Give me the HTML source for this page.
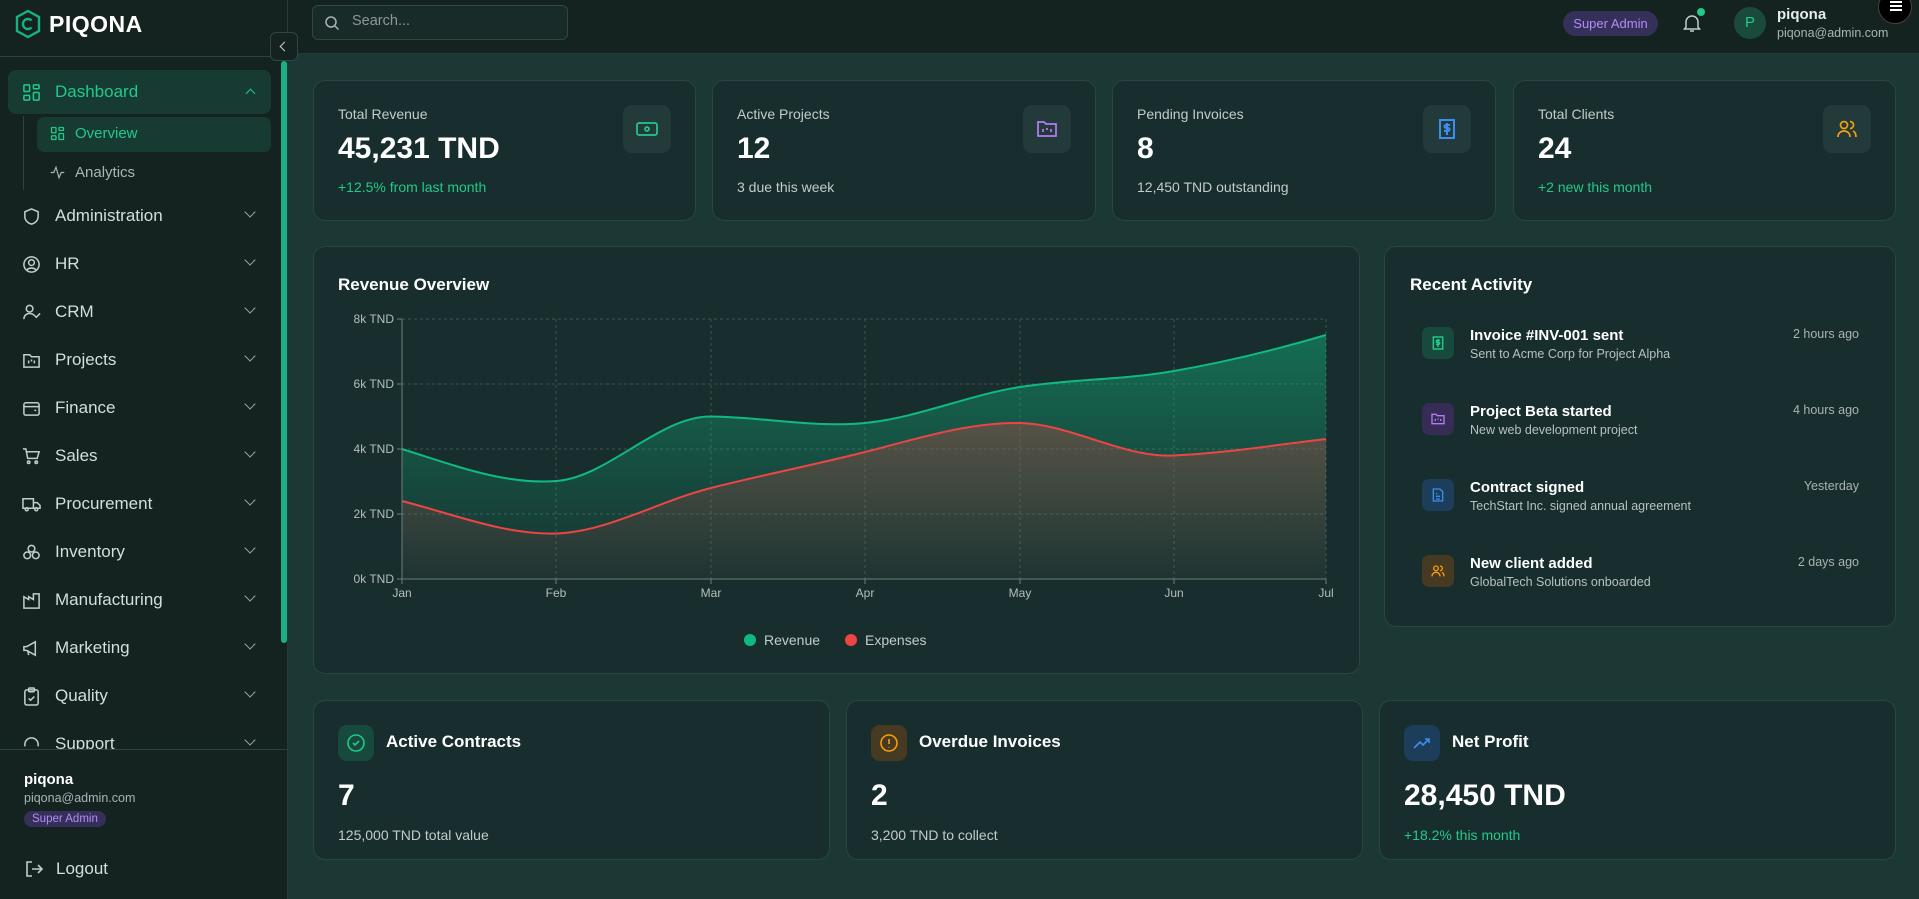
<!DOCTYPE html>
<html><head><meta charset="utf-8"><style>
*{box-sizing:border-box;margin:0;padding:0}
body{width:1919px;height:899px;overflow:hidden;background:#1c3835;font-family:"Liberation Sans",sans-serif;color:#fff;position:relative}
.abs{position:absolute}
.side{left:0;top:0;width:288px;height:899px;background:#14231f;border-right:1px solid #243a36}
.hdr{left:288px;top:0;width:1631px;height:54px;background:#14231f;border-bottom:1px solid #243a36}
.card{position:absolute;background:#182e2e;border:1px solid #2a4441;border-radius:12px}
.nav{position:absolute;left:22px;font-size:17px;color:#d6dedc;display:flex;align-items:center}
.nav svg{margin-right:14px}
.chev{position:absolute;left:246px;width:8px;height:8px;border-right:1.6px solid #9aa7a4;border-bottom:1.6px solid #9aa7a4;transform:rotate(45deg)}
.lbl{font-size:14px;color:#c3ccca}
.big{font-size:30px;font-weight:bold}
.ib{position:absolute;width:48px;height:48px;border-radius:9px;background:#223a39;display:flex;align-items:center;justify-content:center}
.sub{font-size:14px}
.ax{font-size:12px;fill:#b4bfbc;font-family:"Liberation Sans",sans-serif}
.act-t{font-size:15px;font-weight:bold;color:#fff}
.act-s{font-size:12.5px;color:#b7c1bf;margin-top:3px}
.act-tm{position:absolute;right:36px;font-size:12.5px;color:#a9b3b1}
.ai{position:absolute;left:37px;width:32px;height:32px;border-radius:7px;display:flex;align-items:center;justify-content:center}
</style></head><body>
<div class="abs side"></div>
<div class="abs hdr"></div>
<!-- logo -->
<svg class="abs" style="left:13px;top:9px" width="30" height="30" viewBox="0 0 30 30"><path d="M15 2 L26 8 L26 22 L15 28 L4 22 L4 8 Z" fill="none" stroke="#19b184" stroke-width="2.4"/><path d="M18.5 11.5 A5 5 0 1 0 18.5 18.5" fill="none" stroke="#19b184" stroke-width="2.4"/></svg>
<div class="abs" style="left:49px;top:11px;font-size:23px;font-weight:bold;letter-spacing:0.5px">PIQONA</div>
<div class="abs" style="left:0;top:56px;width:288px;height:1px;background:#2a4340"></div>
<div class="abs" style="left:270px;top:32px;width:28px;height:29px;border:1px solid #2e4744;border-radius:6px;background:#14231f"></div>
<div class="abs" style="left:281px;top:43px;width:7px;height:7px;border-left:1.6px solid #c8d0ce;border-bottom:1.6px solid #c8d0ce;transform:rotate(45deg)"></div>
<div class="abs" style="left:281px;top:61px;width:6px;height:582px;background:#19b184;border-radius:3px"></div>
<!-- Sidebar nav -->
<div class="abs" style="left:8px;top:70px;width:263px;height:44px;background:#173a32;border-radius:8px"></div>
<div class="nav" style="top:82px;color:#22c98a"><svg width="19" height="19" viewBox="0 0 20 20" fill="none" stroke="#22c98a" stroke-width="1.6"><rect x="2" y="2" width="6" height="7" rx="1"/><rect x="12" y="2" width="6" height="4" rx="1"/><rect x="12" y="10" width="6" height="8" rx="1"/><rect x="2" y="13" width="6" height="5" rx="1"/></svg>Dashboard</div>
<div class="abs" style="left:247px;top:90px;width:7px;height:7px;border-left:1.6px solid #22c98a;border-top:1.6px solid #22c98a;transform:rotate(45deg)"></div>
<div class="abs" style="left:23px;top:116px;width:1px;height:74px;background:#2c4340"></div>
<div class="abs" style="left:37px;top:117px;width:234px;height:35px;background:#173a32;border-radius:7px"></div>
<div class="nav" style="left:50px;top:125px;font-size:15px;color:#22c98a"><svg width="15" height="15" viewBox="0 0 20 20" fill="none" stroke="#22c98a" stroke-width="1.8" style="margin-right:10px"><rect x="2" y="2" width="6" height="7" rx="1"/><rect x="12" y="2" width="6" height="4" rx="1"/><rect x="12" y="10" width="6" height="8" rx="1"/><rect x="2" y="13" width="6" height="5" rx="1"/></svg>Overview</div>
<div class="nav" style="left:50px;top:164px;font-size:15px;color:#aab4b2"><svg width="15" height="15" viewBox="0 0 20 20" fill="none" stroke="#aab4b2" stroke-width="1.6" style="margin-right:10px"><path d="M1 10h4l3-7 4 14 3-7h4"/></svg>Analytics</div>
<div class="nav" style="top:206px"><svg width="19" height="19" viewBox="0 0 20 20" fill="none" stroke="#c3ccca" stroke-width="1.6"><path d="M10 2l7 3v5c0 4-3 7-7 8-4-1-7-4-7-8V5z"/></svg>Administration</div><div class="chev" style="top:208px"></div>
<div class="nav" style="top:254px"><svg width="19" height="19" viewBox="0 0 20 20" fill="none" stroke="#c3ccca" stroke-width="1.6"><circle cx="10" cy="10" r="8"/><circle cx="10" cy="8" r="3"/><path d="M5 16c2-3 8-3 10 0"/></svg>HR</div><div class="chev" style="top:256px"></div>
<div class="nav" style="top:302px"><svg width="19" height="19" viewBox="0 0 20 20" fill="none" stroke="#c3ccca" stroke-width="1.6"><circle cx="8" cy="6" r="3.5"/><path d="M2 17c0-4 3-6 6-6s4 1 5 2"/><path d="M13 13l2 2 4-4"/></svg>CRM</div><div class="chev" style="top:304px"></div>
<div class="nav" style="top:350px"><svg width="19" height="19" viewBox="0 0 20 20" fill="none" stroke="#c3ccca" stroke-width="1.6"><path d="M2 4h6l2 2h8v11H2z"/><path d="M7 10v3M10 9v2M13 10v3"/></svg>Projects</div><div class="chev" style="top:352px"></div>
<div class="nav" style="top:398px"><svg width="19" height="19" viewBox="0 0 20 20" fill="none" stroke="#c3ccca" stroke-width="1.6"><rect x="2" y="4" width="16" height="13" rx="2"/><path d="M2 8h16M13 12h2"/></svg>Finance</div><div class="chev" style="top:400px"></div>
<div class="nav" style="top:446px"><svg width="19" height="19" viewBox="0 0 20 20" fill="none" stroke="#c3ccca" stroke-width="1.6"><path d="M1 2h3l2 10h10l2-7H5"/><circle cx="7" cy="16" r="1.3"/><circle cx="15" cy="16" r="1.3"/></svg>Sales</div><div class="chev" style="top:448px"></div>
<div class="nav" style="top:494px"><svg width="19" height="19" viewBox="0 0 20 20" fill="none" stroke="#c3ccca" stroke-width="1.6"><path d="M1 4h11v10H1zM12 8h4l3 3v3h-7"/><circle cx="5" cy="15" r="1.6"/><circle cx="15" cy="15" r="1.6"/></svg>Procurement</div><div class="chev" style="top:496px"></div>
<div class="nav" style="top:542px"><svg width="19" height="19" viewBox="0 0 20 20" fill="none" stroke="#c3ccca" stroke-width="1.6"><circle cx="10" cy="6" r="3.5"/><circle cx="5.5" cy="13" r="3.5"/><circle cx="14.5" cy="13" r="3.5"/></svg>Inventory</div><div class="chev" style="top:544px"></div>
<div class="nav" style="top:590px"><svg width="19" height="19" viewBox="0 0 20 20" fill="none" stroke="#c3ccca" stroke-width="1.6"><path d="M2 18V6l5 3V6l5 3V3h6v15z"/></svg>Manufacturing</div><div class="chev" style="top:592px"></div>
<div class="nav" style="top:638px"><svg width="19" height="19" viewBox="0 0 20 20" fill="none" stroke="#c3ccca" stroke-width="1.6"><path d="M2 8v4h3l9 5V3L5 8z"/><path d="M6 12l1 5"/></svg>Marketing</div><div class="chev" style="top:640px"></div>
<div class="nav" style="top:686px"><svg width="19" height="19" viewBox="0 0 20 20" fill="none" stroke="#c3ccca" stroke-width="1.6"><rect x="3" y="3" width="14" height="16" rx="2"/><rect x="7" y="1" width="6" height="4" rx="1"/><path d="M7 12l2 2 4-4"/></svg>Quality</div><div class="chev" style="top:688px"></div>
<div class="abs" style="left:0;top:732px;width:281px;height:17px;overflow:hidden"><div class="nav" style="top:2px"><svg width="19" height="19" viewBox="0 0 20 20" fill="none" stroke="#c3ccca" stroke-width="1.6"><path d="M3 12V10a7 7 0 0 1 14 0v2"/></svg>Support</div><div class="chev" style="top:4px"></div></div>
<div class="abs" style="left:0;top:749px;width:288px;height:1px;background:#2a4340"></div>
<div class="abs" style="left:24px;top:771px;font-size:15px;font-weight:bold">piqona</div>
<div class="abs" style="left:24px;top:791px;font-size:12.5px;color:#aab4b2">piqona@admin.com</div>
<div class="abs" style="left:24px;top:811px;padding:2px 8px;font-size:11.5px;color:#b28cf5;background:#35305a;border-radius:9px">Super Admin</div>
<svg class="abs" style="left:24px;top:859px" width="20" height="20" viewBox="0 0 20 20" fill="none" stroke="#c3ccca" stroke-width="1.6"><path d="M8 3H3v14h5M8 10h10M14 6l4 4-4 4"/></svg>
<div class="abs" style="left:56px;top:859px;font-size:17px;color:#d6dedc">Logout</div>
<!-- header -->
<div class="abs" style="left:312px;top:5px;width:256px;height:35px;border:1px solid #2e4744;border-radius:6px;background:#182b28"></div>
<svg class="abs" style="left:324px;top:15px" width="16" height="16" viewBox="0 0 16 16" fill="none" stroke="#aab4b2" stroke-width="1.5"><circle cx="7" cy="7" r="5"/><path d="M11 11l3.5 3.5"/></svg>
<div class="abs" style="left:352px;top:13px;font-size:14.5px;color:#8d9896">Search...</div>
<div class="abs" style="left:1563px;top:11px;width:95px;height:25px;border-radius:13px;background:#35305a;color:#b28cf5;font-size:13px;text-align:center;line-height:25px">Super Admin</div>
<svg class="abs" style="left:1683px;top:13px" width="18" height="20" viewBox="0 0 18 20" fill="none" stroke="#c3ccca" stroke-width="1.5"><path d="M3 14V9a6 6 0 0 1 12 0v5l1.5 2h-15z"/><path d="M7 18h4"/></svg>
<div class="abs" style="left:1697px;top:8px;width:8px;height:8px;border-radius:50%;background:#22c98a"></div>
<div class="abs" style="left:1734px;top:7px;width:32px;height:32px;border-radius:50%;background:#1a4a3c;color:#22c98a;font-size:15px;text-align:center;line-height:32px">P</div>
<div class="abs" style="left:1777px;top:6px;font-size:15px;font-weight:bold;color:#e6ecea">piqona</div>
<div class="abs" style="left:1777px;top:26px;font-size:12.5px;color:#aab4b2">piqona@admin.com</div>
<div class="abs" style="left:1878px;top:-10px;width:34px;height:34px;border-radius:50%;background:#000;border:1px solid #444"></div>
<div class="abs" style="left:1890px;top:5px;width:12px;height:2px;background:#fff;box-shadow:0 -4px 0 #fff,0 4px 0 #fff"></div>
<!-- stat cards -->
<div class="card" style="left:313px;top:80px;width:383px;height:141px"><div class="abs lbl" style="left:24px;top:25px">Total Revenue</div><div class="abs big" style="left:24px;top:51px">45,231 TND</div><div class="abs sub" style="left:24px;top:98px;color:#22c98a">+12.5% from last month</div>
<div class="ib" style="right:24px;top:24px"><svg width="24" height="24" viewBox="0 0 24 24" fill="none" stroke="#22c98a" stroke-width="1.7"><rect x="2" y="6" width="20" height="12" rx="2"/><circle cx="12" cy="12" r="2"/><path d="M6 12h.01M18 12h.01"/></svg></div></div>
<div class="card" style="left:712px;top:80px;width:384px;height:141px"><div class="abs lbl" style="left:24px;top:25px">Active Projects</div><div class="abs big" style="left:24px;top:51px">12</div><div class="abs sub" style="left:24px;top:98px;color:#c3ccca">3 due this week</div>
<div class="ib" style="right:24px;top:24px"><svg width="24" height="24" viewBox="0 0 24 24" fill="none" stroke="#b57bf5" stroke-width="1.7"><path d="M3 5h6l2 2h10v12H3z"/><path d="M8 12v3M12 11v2M16 12v3"/></svg></div></div>
<div class="card" style="left:1112px;top:80px;width:384px;height:141px"><div class="abs lbl" style="left:24px;top:25px">Pending Invoices</div><div class="abs big" style="left:24px;top:51px">8</div><div class="abs sub" style="left:24px;top:98px;color:#c3ccca">12,450 TND outstanding</div>
<div class="ib" style="right:24px;top:24px"><svg width="24" height="24" viewBox="0 0 24 24" fill="none" stroke="#3b8ef0" stroke-width="2"><rect x="5" y="3" width="14" height="18"/><path d="M15 8h-4a1.5 1.5 0 0 0 0 3h2a1.5 1.5 0 0 1 0 3H9M12 6v12"/></svg></div></div>
<div class="card" style="left:1513px;top:80px;width:383px;height:141px"><div class="abs lbl" style="left:24px;top:25px">Total Clients</div><div class="abs big" style="left:24px;top:51px">24</div><div class="abs sub" style="left:24px;top:98px;color:#22c98a">+2 new this month</div>
<div class="ib" style="right:24px;top:24px"><svg width="24" height="24" viewBox="0 0 24 24" fill="none" stroke="#f59e0b" stroke-width="1.7"><circle cx="9" cy="8" r="3.5"/><path d="M3 20c0-4 3-6 6-6s6 2 6 6"/><path d="M15 4.5a3.5 3.5 0 0 1 0 7M18 14c2 1 3 3 3 6"/></svg></div></div>
<!-- revenue chart -->
<div class="card" style="left:313px;top:246px;width:1047px;height:428px"><div class="abs" style="left:24px;top:28px;font-size:17px;font-weight:bold">Revenue Overview</div></div>
<svg class="abs" style="left:313px;top:246px" width="1047" height="428" viewBox="313 246 1047 428">
<defs><linearGradient id="gr" x1="0" y1="0" x2="0" y2="1"><stop offset="0" stop-color="#10b981" stop-opacity="0.45"/><stop offset="1" stop-color="#10b981" stop-opacity="0.03"/></linearGradient>
<linearGradient id="ge" x1="0" y1="0" x2="0" y2="1"><stop offset="0" stop-color="#ef4444" stop-opacity="0.3"/><stop offset="1" stop-color="#ef4444" stop-opacity="0.03"/></linearGradient></defs>
<g stroke="#3c5451" stroke-dasharray="3 3" stroke-width="1">
<path d="M402 319H1326M402 384H1326M402 449H1326M402 514H1326"/>
<path d="M556 319V579M711 319V579M865 319V579M1020 319V579M1174 319V579M1326 319V579"/></g>
<path d="M402 449 C453 465 505 485 556 481 C607 478 659 416 711 416.5 C762 417 814 428 865 423 C917 418 968 395 1020 387 C1071 379 1123 380 1174 371 C1226 362 1275 350 1326 335 L1326 579 L402 579Z" fill="url(#gr)"/>
<path d="M402 501 C453 514 505 535 556 533.5 C607 532 659 501 711 488 C762 475 814 465 865 452 C917 439 968 422 1020 423 C1071 424 1123 458 1174 455.5 C1226 453 1275 445 1326 439 L1326 579 L402 579Z" fill="url(#ge)"/>
<path d="M402 449 C453 465 505 485 556 481 C607 478 659 416 711 416.5 C762 417 814 428 865 423 C917 418 968 395 1020 387 C1071 379 1123 380 1174 371 C1226 362 1275 350 1326 335" fill="none" stroke="#10b981" stroke-width="2"/>
<path d="M402 501 C453 514 505 535 556 533.5 C607 532 659 501 711 488 C762 475 814 465 865 452 C917 439 968 422 1020 423 C1071 424 1123 458 1174 455.5 C1226 453 1275 445 1326 439" fill="none" stroke="#ef4444" stroke-width="2"/>
<path d="M402 319V579H1326" stroke="#6b7d7a" stroke-width="1" fill="none"/>
<g stroke="#6b7d7a"><path d="M397 319h5M397 384h5M397 449h5M397 514h5M397 579h5M402 579v5M556 579v5M711 579v5M865 579v5M1020 579v5M1174 579v5M1326 579v5"/></g>
<g class="ax" text-anchor="end"><text x="394" y="323">8k TND</text><text x="394" y="388">6k TND</text><text x="394" y="453">4k TND</text><text x="394" y="518">2k TND</text><text x="394" y="583">0k TND</text></g>
<g class="ax" text-anchor="middle"><text x="402" y="597">Jan</text><text x="556" y="597">Feb</text><text x="711" y="597">Mar</text><text x="865" y="597">Apr</text><text x="1020" y="597">May</text><text x="1174" y="597">Jun</text><text x="1326" y="597">Jul</text></g>
<circle cx="750" cy="640" r="6" fill="#10b981"/><text x="764" y="645" font-size="14" fill="#c3ccca" font-family="Liberation Sans,sans-serif">Revenue</text>
<circle cx="851" cy="640" r="6" fill="#ef4444"/><text x="865" y="645" font-size="14" fill="#c3ccca" font-family="Liberation Sans,sans-serif">Expenses</text>
</svg>
<!-- recent activity -->
<div class="card" style="left:1384px;top:246px;width:512px;height:381px">
<div class="abs" style="left:25px;top:28px;font-size:17px;font-weight:bold">Recent Activity</div>
<div class="ai" style="top:80px;background:#17493c"><svg width="16" height="16" viewBox="0 0 24 24" fill="none" stroke="#22c98a" stroke-width="2.2"><rect x="5" y="3" width="14" height="18"/><path d="M15 8h-4a1.5 1.5 0 0 0 0 3h2a1.5 1.5 0 0 1 0 3H9M12 6v12"/></svg></div>
<div class="abs" style="left:85px;top:80px"><div class="act-t">Invoice #INV-001 sent</div><div class="act-s">Sent to Acme Corp for Project Alpha</div></div><div class="act-tm" style="top:80px">2 hours ago</div>
<div class="ai" style="top:156px;background:#352d55"><svg width="16" height="16" viewBox="0 0 24 24" fill="none" stroke="#b57bf5" stroke-width="2"><path d="M3 5h6l2 2h10v12H3z"/><path d="M8 12v3M12 11v2M16 12v3"/></svg></div>
<div class="abs" style="left:85px;top:156px"><div class="act-t">Project Beta started</div><div class="act-s">New web development project</div></div><div class="act-tm" style="top:156px">4 hours ago</div>
<div class="ai" style="top:232px;background:#1d3e5a"><svg width="16" height="16" viewBox="0 0 24 24" fill="none" stroke="#3b8ef0" stroke-width="2"><path d="M5 3h10l4 4v14H5z"/><path d="M9 10h2M9 14h6M9 18h6"/></svg></div>
<div class="abs" style="left:85px;top:232px"><div class="act-t">Contract signed</div><div class="act-s">TechStart Inc. signed annual agreement</div></div><div class="act-tm" style="top:232px">Yesterday</div>
<div class="ai" style="top:308px;background:#473a22"><svg width="16" height="16" viewBox="0 0 24 24" fill="none" stroke="#f59e0b" stroke-width="2"><circle cx="9" cy="8" r="3.5"/><path d="M3 20c0-4 3-6 6-6s6 2 6 6"/><path d="M15 4.5a3.5 3.5 0 0 1 0 7M18 14c2 1 3 3 3 6"/></svg></div>
<div class="abs" style="left:85px;top:308px"><div class="act-t">New client added</div><div class="act-s">GlobalTech Solutions onboarded</div></div><div class="act-tm" style="top:308px">2 days ago</div>
</div>
<!-- bottom cards -->
<div class="card" style="left:313px;top:700px;width:517px;height:160px">
<div class="ib" style="left:24px;top:24px;width:36px;height:36px;background:#17493c"><svg width="20" height="20" viewBox="0 0 20 20" fill="none" stroke="#22c98a" stroke-width="1.6"><circle cx="10" cy="10" r="8"/><path d="M7 10l2 2 4-4"/></svg></div>
<div class="abs" style="left:72px;top:31px;font-size:17px;font-weight:bold">Active Contracts</div>
<div class="abs big" style="left:24px;top:78px">7</div><div class="abs sub" style="left:24px;top:126px;color:#c3ccca">125,000 TND total value</div></div>
<div class="card" style="left:846px;top:700px;width:517px;height:160px">
<div class="ib" style="left:24px;top:24px;width:36px;height:36px;background:#473a22"><svg width="20" height="20" viewBox="0 0 20 20" fill="none" stroke="#f59e0b" stroke-width="1.6"><circle cx="10" cy="10" r="8"/><path d="M10 6v5M10 14v.5"/></svg></div>
<div class="abs" style="left:72px;top:31px;font-size:17px;font-weight:bold">Overdue Invoices</div>
<div class="abs big" style="left:24px;top:78px">2</div><div class="abs sub" style="left:24px;top:126px;color:#c3ccca">3,200 TND to collect</div></div>
<div class="card" style="left:1379px;top:700px;width:517px;height:160px">
<div class="ib" style="left:24px;top:24px;width:36px;height:36px;background:#1d3e5a"><svg width="20" height="20" viewBox="0 0 20 20" fill="none" stroke="#3b8ef0" stroke-width="1.6"><path d="M2 15l6-6 3 3 6-6M13 6h4v4"/></svg></div>
<div class="abs" style="left:72px;top:31px;font-size:17px;font-weight:bold">Net Profit</div>
<div class="abs big" style="left:24px;top:78px">28,450 TND</div><div class="abs sub" style="left:24px;top:126px;color:#22c98a">+18.2% this month</div></div>
</body></html>
